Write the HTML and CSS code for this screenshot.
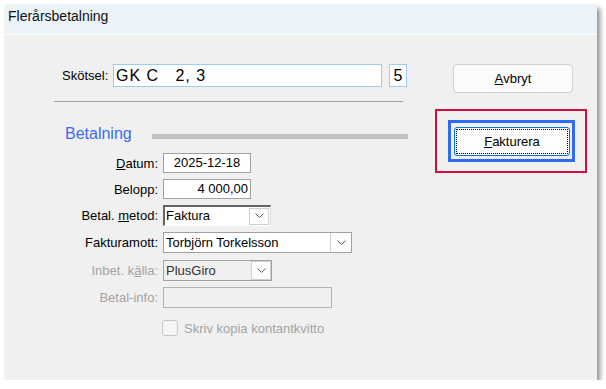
FILE: index.html
```html
<!DOCTYPE html>
<html>
<head>
<meta charset="utf-8">
<link rel="stylesheet" href="styles.css">
</head>
<body>
<div class="window">
  <div class="titlebar">Flerårsbetalning</div>
  <div class="body">
    <div class="main">
      <div class="skotsel-row">
        <span class="skotsel-label">Skötsel:</span>
        <div class="skotsel-input">GK C   2, 3</div>
        <div class="skotsel-num">5</div>
      </div>
      <div class="divider"></div>
      <div class="section-head">
        <span class="section-title">Betalning</span>
        <span class="section-bar"></span>
      </div>
      <div class="form">
        <div class="row">
          <label class="lbl"><u>D</u>atum:</label>
          <div class="field date">2025-12-18</div>
        </div>
        <div class="row">
          <label class="lbl">Belopp:</label>
          <div class="field amount">4 000,00</div>
        </div>
        <div class="row">
          <label class="lbl">Betal. <u>m</u>etod:</label>
          <div class="combo sunken method">
            <span class="combo-text">Faktura</span>
            <span class="combo-btn btn-boxed">
              <svg width="9" height="6" viewBox="0 0 9 6"><path d="M0.5 0.5 L4.5 4.5 L8.5 0.5" fill="none" stroke="#606060" stroke-width="1"/></svg>
            </span>
          </div>
        </div>
        <div class="row">
          <label class="lbl">Fakturamott:</label>
          <div class="combo flat recipient">
            <span class="combo-text">Torbjörn Torkelsson</span>
            <span class="combo-btn btn-side">
              <svg width="9" height="6" viewBox="0 0 9 6"><path d="M0.5 0.5 L4.5 4.5 L8.5 0.5" fill="none" stroke="#606060" stroke-width="1"/></svg>
            </span>
          </div>
        </div>
        <div class="row row-shift">
          <label class="lbl disabled">Inbet. k<u>ä</u>lla:</label>
          <div class="combo flat dis source">
            <span class="combo-text">PlusGiro</span>
            <span class="combo-btn btn-boxed btn-source">
              <svg width="9" height="6" viewBox="0 0 9 6"><path d="M0.5 0.5 L4.5 4.5 L8.5 0.5" fill="none" stroke="#606060" stroke-width="1"/></svg>
            </span>
          </div>
        </div>
        <div class="row">
          <label class="lbl disabled">Betal-info:</label>
          <div class="field info"></div>
        </div>
        <div class="check-row">
          <span class="checkbox"></span>
          <span class="check-label">Skriv kopia kontantkvitto</span>
        </div>
      </div>
    </div>
    <div class="side">
      <div class="button cancel"><u>A</u>vbryt</div>
      <div class="mark-red">
        <div class="mark-blue">
          <div class="button primary"><u>F</u>akturera</div>
        </div>
      </div>
    </div>
  </div>
</div>
</body>
</html>
```

FILE: styles.css
```css
html, body {
  margin: 0;
  padding: 0;
  background: #ffffff;
}
body {
  font-family: "Liberation Sans", Arial, sans-serif;
  font-size: 13px;
  color: #000;
}
.window {
  margin: 5px 0 0 5px;
  width: 592px;
  height: 375px;
  background: #f0f0f0;
  box-shadow: 3px 3px 5px rgba(0, 0, 0, 0.45);
  overflow: hidden;
}
.titlebar {
  height: 26px;
  padding: 3px 0 0 3px;
  background: #eaf3f8;
  border-bottom: 1px solid #ffffff;
  font-size: 14px;
  line-height: 16px;
  color: #111;
}
.body {
  display: flex;
}
.main {
  width: 430px;
}
.skotsel-row {
  display: flex;
  align-items: center;
  margin: 29px 0 0 57px;
}
.skotsel-label {
  width: 47px;
  margin-right: 4px;
}
.skotsel-input {
  box-sizing: border-box;
  width: 269px;
  height: 23px;
  border: 1px solid #9ccbf3;
  background: #fff;
  font-size: 16px;
  line-height: 21px;
  letter-spacing: 1px;
  padding-left: 2px;
  white-space: pre;
  color: #000;
}
.skotsel-num {
  box-sizing: border-box;
  width: 18px;
  height: 23px;
  margin-left: 7px;
  border: 1px solid #9ccbf3;
  background: #fff;
  font-size: 16px;
  line-height: 21px;
  text-align: center;
}
.divider {
  margin: 14px 0 0 49px;
  width: 349px;
  height: 1px;
  background: #a0a0a0;
}
.section-head {
  display: flex;
  margin: 22px 0 0 60px;
  height: 19px;
}
.section-title {
  font-size: 16px;
  line-height: 19px;
  color: #3a6cf4;
}
.section-bar {
  margin: 10px 0 0 20px;
  width: 256px;
  height: 5px;
  background: #c0c0c0;
}
.form {
  margin-top: 10px;
  display: flex;
  flex-direction: column;
  gap: 6px;
}
.row {
  display: flex;
  align-items: center;
}
.row-shift {
  margin-top: 1px;
}
.lbl {
  width: 153px;
  margin-right: 5px;
  text-align: right;
  color: #000;
}
.lbl.disabled {
  color: #a3a3a3;
}
.field {
  box-sizing: border-box;
  height: 20px;
  border: 1px solid #a0a0a0;
  background: #fff;
  line-height: 18px;
  padding: 0 2px;
}
.field.date {
  width: 88px;
  text-align: center;
}
.field.amount {
  width: 88px;
  text-align: right;
}
.field.info {
  width: 169px;
  height: 21px;
  background: #f0f0f0;
  border-color: #b4b4b4;
}
.combo {
  box-sizing: border-box;
  height: 21px;
  display: flex;
  align-items: center;
  background: #fff;
}
.combo-text {
  flex: 1;
  padding-left: 2px;
  line-height: 18px;
}
.combo.sunken {
  border-style: solid;
  border-width: 2px 1px 1px 2px;
  border-color: #646464 #dcdcdc #ffffff #646464;
}
.combo.sunken .combo-text {
  padding-left: 1px;
}
.combo.flat {
  border: 1px solid #a0a0a0;
}
.combo.dis {
  background: #f0f0f0;
}
.combo.dis .combo-text {
  color: #303030;
}
.method {
  width: 108px;
}
.recipient {
  width: 189px;
}
.source {
  width: 109px;
}
.combo-btn {
  box-sizing: border-box;
  display: flex;
  align-items: center;
  justify-content: center;
  background: #fdfdfd;
}
.btn-boxed {
  width: 20px;
  height: 17px;
  margin-right: 1px;
  border: 1px solid #cfcfcf;
}
.btn-source {
  height: 19px;
  margin-right: 0;
}
.btn-side {
  width: 21px;
  height: 19px;
  border-left: 1px solid #cfcfcf;
}
.check-row {
  display: flex;
  align-items: center;
  margin: 6px 0 0 157px;
}
.checkbox {
  box-sizing: border-box;
  width: 16px;
  height: 16px;
  border: 1px solid #c6c6c6;
  border-radius: 3px;
  background: #f6f6f6;
}
.check-label {
  margin-left: 6px;
  color: #a3a3a3;
}
.side {
  display: flex;
  flex-direction: column;
  align-items: flex-start;
}
.button {
  box-sizing: border-box;
  height: 29px;
  display: flex;
  align-items: center;
  justify-content: center;
  background: #fdfdfd;
}
.cancel {
  width: 120px;
  margin: 29px 0 0 18px;
  border: 1px solid #d0d0d0;
  border-radius: 4px;
  background: #fbfbfb;
}
.mark-red {
  box-sizing: border-box;
  width: 152px;
  height: 64px;
  margin-top: 16px;
  border: 2px solid #d40c3c;
  padding: 9px 0 0 11px;
}
.mark-blue {
  box-sizing: border-box;
  width: 127px;
  height: 42px;
  border: 3px solid #2f6bf5;
  padding: 4px 0 0 3px;
}
.primary {
  width: 116px;
  border: 1px solid #0078d7;
  border-radius: 3px;
  outline: 1px dotted #000;
  outline-offset: -3px;
}
u {
  text-decoration: underline;
  text-underline-offset: 1px;
}
```
